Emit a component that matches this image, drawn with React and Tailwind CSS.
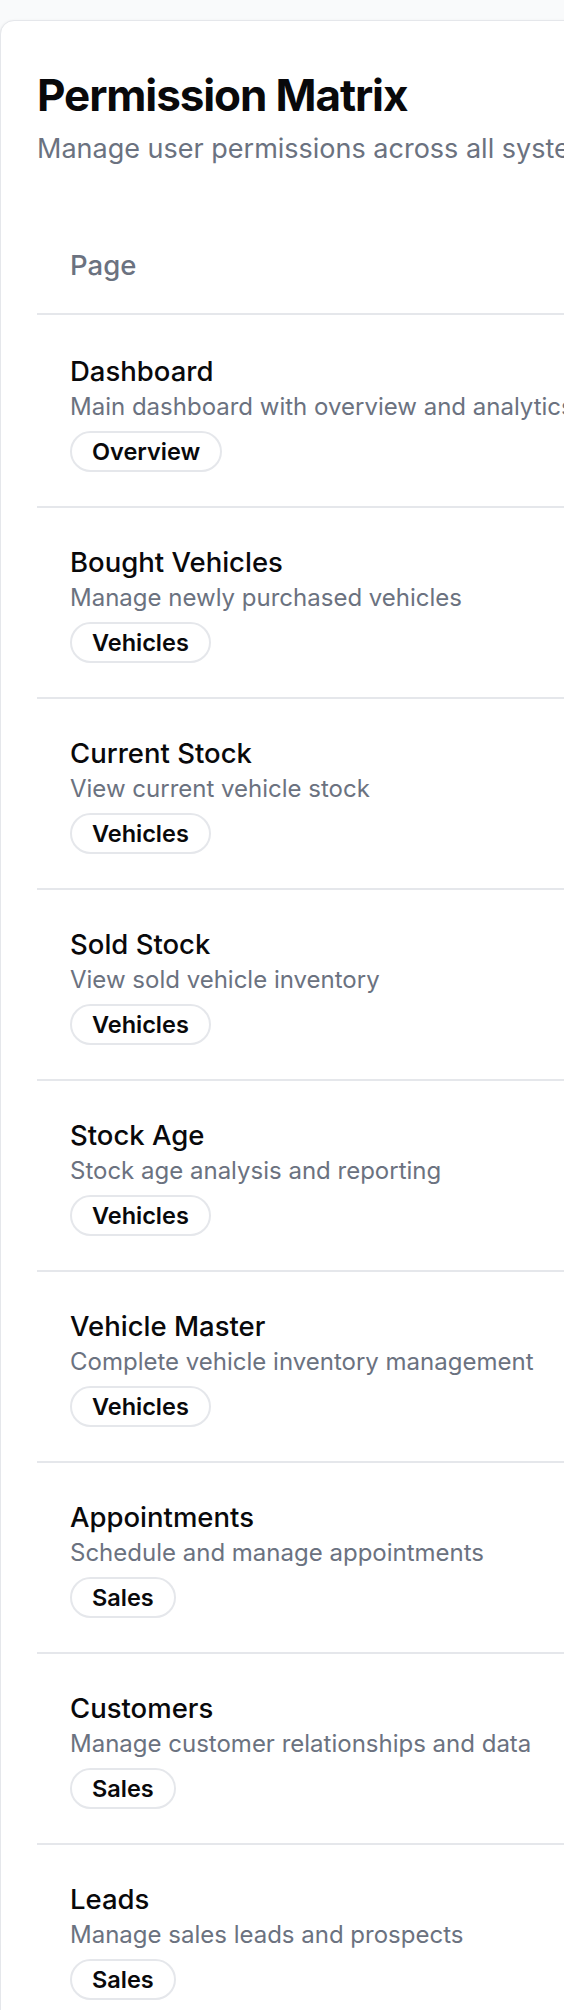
import React from "react";

const rows = [
  ["Dashboard", "Main dashboard with overview and analytics", "Overview"],
  ["Bought Vehicles", "Manage newly purchased vehicles", "Vehicles"],
  ["Current Stock", "View current vehicle stock", "Vehicles"],
  ["Sold Stock", "View sold vehicle inventory", "Vehicles"],
  ["Stock Age", "Stock age analysis and reporting", "Vehicles"],
  ["Vehicle Master", "Complete vehicle inventory management", "Vehicles"],
  ["Appointments", "Schedule and manage appointments", "Sales"],
  ["Customers", "Manage customer relationships and data", "Sales"],
  ["Leads", "Manage sales leads and prospects", "Sales"],
];

const roles = ["Admin", "Manager", "Sales", "Viewer"];

export default function App() {
  return (
    <div className="min-h-screen bg-[#f9fafb] pt-[20px] overflow-hidden font-['Inter',sans-serif]">
      <div className="w-[1500px] bg-white border border-[#e5e7eb] rounded-[14px] shadow-sm">
        <div className="px-[36px] pt-[49px] pb-[42px]">
          <h1 className="text-[44px] leading-[50px] font-bold tracking-[-0.025em] text-[#09090b]">
            Permission Matrix
          </h1>
          <p className="mt-[9px] text-[27px] leading-[40px] text-[#6b7280] whitespace-nowrap">
            Manage user permissions across all system pages and roles
          </p>
        </div>
        <div className="px-[36px]">
          <table className="w-full">
            <thead>
              <tr>
                <th className="w-[760px] text-left pl-[33px] pt-[34px] pb-[28px] text-[27.5px] leading-[40px] font-medium text-[#6b7280] border-b-2 border-[#e5e7eb]">
                  Page
                </th>
                {roles.map((r) => (
                  <th
                    key={r}
                    className="text-center pt-[34px] pb-[28px] text-[27.5px] leading-[40px] font-medium text-[#6b7280] border-b-2 border-[#e5e7eb]"
                  >
                    {r}
                  </th>
                ))}
              </tr>
            </thead>
            <tbody>
              {rows.map(([title, desc, tag], i) => (
                <tr key={title}>
                  <td
                    className={`pl-[33px] pb-[34px] border-b-2 border-[#e5e7eb] align-top ${
                      i === 0 ? "pt-[37px]" : "pt-[35px]"
                    }`}
                  >
                    <div className="text-[27.5px] leading-[38px] font-medium text-[#09090b] whitespace-nowrap">
                      {title}
                    </div>
                    <div className="text-[24px] leading-[33px] text-[#6b7280] whitespace-nowrap">
                      {desc}
                    </div>
                    <div className="mt-[8px] flex">
                      <span className="h-[41px] inline-flex items-center px-[20px] rounded-full border-2 border-[#e5e7eb] text-[23.5px] font-semibold text-[#09090b]">
                        {tag}
                      </span>
                    </div>
                  </td>
                  {roles.map((r) => (
                    <td key={r} className="text-center border-b-2 border-[#e5e7eb]">
                      <span className="inline-block w-[28px] h-[28px] rounded-[6px] border-2 border-[#d1d5db]" />
                    </td>
                  ))}
                </tr>
              ))}
            </tbody>
          </table>
        </div>
      </div>
    </div>
  );
}
